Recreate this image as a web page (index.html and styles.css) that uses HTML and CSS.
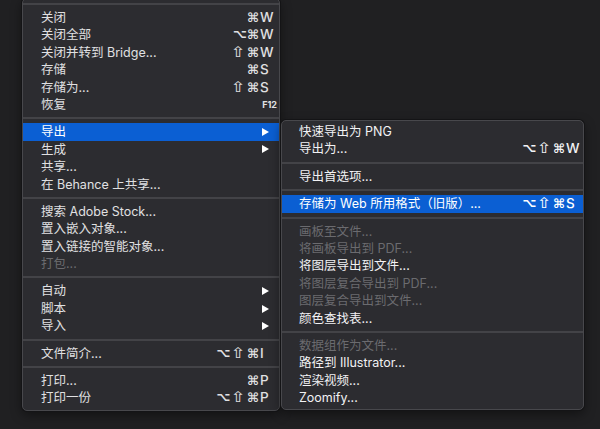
FILE: index.html
```html
<!DOCTYPE html>
<html lang="zh-CN">
<head>
<meta charset="utf-8">
<title>文件菜单</title>
<link rel="stylesheet" href="styles.css">
</head>
<body>
<div class="stage">
  <div class="menu main">
    <div class="sep"></div>
    <div class="item"><span class="label">关闭</span><span class="mods"><i class="cmd">⌘</i></span><span class="key">W</span></div>
    <div class="item"><span class="label">关闭全部</span><span class="mods"><i class="opt">⌥</i><i class="cmd">⌘</i></span><span class="key">W</span></div>
    <div class="item"><span class="label">关闭并转到 Bridge...</span><span class="mods"><i class="shift">⇧</i><i class="cmd">⌘</i></span><span class="key">W</span></div>
    <div class="item"><span class="label">存储</span><span class="mods"><i class="cmd">⌘</i></span><span class="key">S</span></div>
    <div class="item"><span class="label">存储为...</span><span class="mods"><i class="shift">⇧</i><i class="cmd">⌘</i></span><span class="key">S</span></div>
    <div class="item"><span class="label">恢复</span><span class="mods"></span><span class="key fkey">F12</span></div>
    <div class="sep"></div>
    <div class="item active"><span class="label">导出</span><span class="mods"></span><span class="key"><svg class="arrow" viewBox="0 0 7 8"><path d="M0 0L7 4L0 8Z"/></svg></span></div>
    <div class="item"><span class="label">生成</span><span class="mods"></span><span class="key"><svg class="arrow" viewBox="0 0 7 8"><path d="M0 0L7 4L0 8Z"/></svg></span></div>
    <div class="item"><span class="label">共享...</span></div>
    <div class="item"><span class="label">在 Behance 上共享...</span></div>
    <div class="sep"></div>
    <div class="item"><span class="label">搜索 Adobe Stock...</span></div>
    <div class="item"><span class="label">置入嵌入对象...</span></div>
    <div class="item"><span class="label">置入链接的智能对象...</span></div>
    <div class="item disabled"><span class="label">打包...</span></div>
    <div class="sep"></div>
    <div class="item"><span class="label">自动</span><span class="mods"></span><span class="key"><svg class="arrow" viewBox="0 0 7 8"><path d="M0 0L7 4L0 8Z"/></svg></span></div>
    <div class="item"><span class="label">脚本</span><span class="mods"></span><span class="key"><svg class="arrow" viewBox="0 0 7 8"><path d="M0 0L7 4L0 8Z"/></svg></span></div>
    <div class="item"><span class="label">导入</span><span class="mods"></span><span class="key"><svg class="arrow" viewBox="0 0 7 8"><path d="M0 0L7 4L0 8Z"/></svg></span></div>
    <div class="sep"></div>
    <div class="item"><span class="label">文件简介...</span><span class="mods"><i class="opt">⌥</i><i class="shift">⇧</i><i class="cmd">⌘</i></span><span class="key">I</span></div>
    <div class="sep"></div>
    <div class="item"><span class="label">打印...</span><span class="mods"><i class="cmd">⌘</i></span><span class="key">P</span></div>
    <div class="item"><span class="label">打印一份</span><span class="mods"><i class="opt">⌥</i><i class="shift">⇧</i><i class="cmd">⌘</i></span><span class="key">P</span></div>
  </div>

  <div class="menu sub">
    <div class="item bright"><span class="label">快速导出为 PNG</span></div>
    <div class="item bright"><span class="label">导出为...</span><span class="mods"><i class="opt">⌥</i><i class="shift">⇧</i><i class="cmd">⌘</i></span><span class="key">W</span></div>
    <div class="sep"></div>
    <div class="item bright"><span class="label">导出首选项...</span></div>
    <div class="sep"></div>
    <div class="item active"><span class="label">存储为 Web 所用格式（旧版）...</span><span class="mods"><i class="opt">⌥</i><i class="shift">⇧</i><i class="cmd">⌘</i></span><span class="key">S</span></div>
    <div class="sep"></div>
    <div class="item disabled"><span class="label">画板至文件...</span></div>
    <div class="item disabled"><span class="label">将画板导出到 PDF...</span></div>
    <div class="item bright"><span class="label">将图层导出到文件...</span></div>
    <div class="item disabled"><span class="label">将图层复合导出到 PDF...</span></div>
    <div class="item disabled"><span class="label">图层复合导出到文件...</span></div>
    <div class="item bright"><span class="label">颜色查找表...</span></div>
    <div class="sep"></div>
    <div class="item disabled"><span class="label">数据组作为文件...</span></div>
    <div class="item bright"><span class="label">路径到 Illustrator...</span></div>
    <div class="item bright"><span class="label">渲染视频...</span></div>
    <div class="item bright"><span class="label">Zoomify...</span></div>
  </div>
</div>
</body>
</html>
```

FILE: styles.css
```css
html, body {
  margin: 0;
  padding: 0;
}

body {
  background: #202022;
  width: 600px;
  height: 429px;
  overflow: hidden;
  font-family: "Inter", "Noto Sans CJK SC", sans-serif;
  font-size: 12.5px;
  color: #e0e0e2;
}

.stage {
  display: flow-root;
  position: relative;
  height: 429px;
  padding-left: 22px;
}

.menu {
  box-sizing: border-box;
  background: #2c2c30;
  border: 1px solid #48484c;
  border-radius: 5px;
  box-shadow: 0 0 0 1px #141416, 0 4px 12px rgba(0, 0, 0, 0.45);
}

.menu.main {
  width: 258px;
  margin-top: -2px;
  padding: 0 0 3px;
}

.menu.sub {
  position: absolute;
  left: 281px;
  top: 120px;
  width: 303px;
  padding: 2px 0 3px;
}

.item {
  display: grid;
  grid-template-columns: 1fr auto 15px;
  align-items: center;
  height: 17.4px;
  line-height: 17.4px;
  white-space: nowrap;
}

.main .item {
  padding: 0 4px 0 18px;
}

.sub .item {
  padding: 0 2px 0 17px;
}

.item.active {
  background: #0b5fd3;
  color: #ffffff;
}

.item.disabled {
  color: #6b6b6f;
}

.item.bright {
  color: #f2f2f4;
}

.mods {
  display: flex;
  align-items: center;
  justify-content: flex-end;
  padding-right: 1px;
  height: 17.4px;
}

.mods i {
  font-style: normal;
  font-family: "DejaVu Sans", sans-serif;
  font-weight: bold;
  line-height: 17.4px;
}

.mods i.cmd {
  font-size: 13px;
}

.mods i.opt {
  font-size: 12px;
}

.mods i.shift {
  display: inline-block;
  font-weight: normal;
  font-size: 15px;
  transform: scaleX(1.2);
  margin: 0 2px 0 2px;
}

.key {
  text-align: left;
  font-family: "Inter", sans-serif;
  font-size: 13.5px;
  font-weight: 500;
}

.key.fkey {
  justify-self: end;
  margin-right: -2px;
  font-size: 9px;
  font-weight: 700;
}

.arrow {
  display: block;
  width: 7px;
  height: 8px;
  margin-left: 2px;
  fill: #ffffff;
}

.sep {
  height: 10px;
  display: flex;
  align-items: center;
}

.sep::before {
  content: "";
  display: block;
  width: 100%;
  height: 2px;
  background: #434347;
}
```
